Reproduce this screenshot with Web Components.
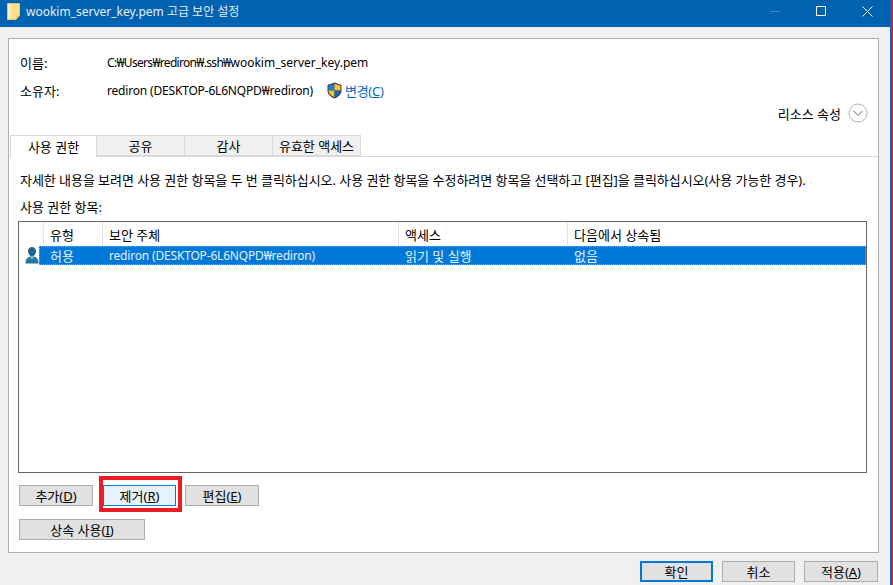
<!DOCTYPE html>
<html lang="ko">
<head>
<meta charset="utf-8">
<title>wookim_server_key.pem 고급 보안 설정</title>
<style>
  html, body { margin: 0; padding: 0; height: 100%; overflow: hidden; background: #f0f0f0; }
  body { font: 13px "Noto Sans", "Noto Sans CJK KR", sans-serif; color: #000; }
  .latin { font-size: 12px; }
  .squeeze { letter-spacing: -0.68px; }
  .tight { letter-spacing: -0.18px; }
</style>
</head>
<body>
<security-window>
  <info-row slot="info" label="이름:" style="height:28px"><span class="latin"><span class="squeeze">C:₩Users₩rediron₩.ssh₩</span>wookim_server_key.pem</span></info-row>
  <info-row slot="info" label="소유자:" style="height:28px">
    <span class="latin tight">rediron (DESKTOP-6L6NQPD₩rediron)</span>
    <change-link></change-link>
  </info-row>
  <perm-tabs slot="tabs"></perm-tabs>
  <perm-list slot="list"></perm-list>
  <div slot="actions" class="actions" style="display:flex;gap:10px;margin-bottom:13px;position:relative">
    <win-button width="74">추가(<u>D</u>)</win-button>
    <win-button width="73" hot>제거(<u>R</u>)</win-button>
    <win-button width="74" style="margin-left:-1px">편집(<u>E</u>)</win-button>
    <red-mark></red-mark>
  </div>
  <div slot="actions"><win-button width="126">상속 사용(<u>I</u>)</win-button></div>
  <win-button slot="footer" width="73" primary>확인</win-button>
  <win-button slot="footer" width="73">취소</win-button>
  <win-button slot="footer" width="74">적용(<u>A</u>)</win-button>
</security-window>

<script>
// Outer frame: title bar, white panel, footer buttons
class SecurityWindow extends HTMLElement {
  constructor() {
    super()
    this.attachShadow({ mode: 'open' })
    this.shadowRoot.innerHTML = `
      <style>
        :host { display: flex; width: 893px; height: 585px; overflow: hidden; }
        .window { width: 890px; border-right: 1px solid #0063b1; background: #f0f0f0; display: flex; flex-direction: column; }
        .edge { width: 2px; background: #ed1c24; }
        .titlebar { height: 27px; box-sizing: border-box; padding-bottom: 5px; background: #0063b1; display: flex; align-items: center; color: #fff; flex: none; }
        .titlebar svg.file { margin: 1px 6px 0 7px; flex: none; }
        .titlebar .name { flex: 1; font-size: 12px; color: #e4eefa; white-space: nowrap; }
        .controls { display: flex; align-items: center; }
        .controls span { width: 46px; height: 22px; display: flex; align-items: center; justify-content: center; }
        .panel { margin: 11px 11px 0 8px; height: 513px; border: 1px solid #b0b0b0; background: #fff; display: flex; flex-direction: column; flex: none; box-sizing: content-box; }
        .info { padding: 9px 11px 0 11px; height: 56px; flex: none; }
        .resource { height: 18px; margin: 0 10px 13px 0; display: flex; justify-content: flex-end; align-items: center; gap: 7px; flex: none; }
        .tabs { flex: none; height: 22px; }
        .body { padding: 14px 11px 0 9px; flex: 1; display: flex; flex-direction: column; min-height: 0; }
        .hint { height: 18px; line-height: 18px; white-space: nowrap; letter-spacing: -0.05px; padding-left: 2px; }
        .caption { height: 18px; line-height: 18px; margin-top: 9px; margin-bottom: 5px; padding-left: 2px; }
        .list { height: 252px; flex: none; }
        .actions { padding: 12px 0 0 1px; }
        .footer { display: flex; justify-content: flex-end; gap: 9px; margin: 8px 12px 0 0; }
      </style>
      <div class="window">
        <div class="titlebar">
          <svg class="file" width="13" height="17" viewBox="0 0 13 17">
            <path d="M0.5 0.5H12.5V12.5L9 16.5H0.5Z" fill="#fde08a" stroke="#e8c767"/>
            <path d="M9 16.5V12.5H12.5Z" fill="#f3c95c"/>
            <rect x="1" y="1" width="3" height="15" fill="#ffeeb5"/>
          </svg>
          <span class="name">wookim_server_key.pem 고급 보안 설정</span>
          <div class="controls">
            <span><svg width="10" height="10"><rect y="5" width="10" height="1" fill="#3d86cc"/></svg></span>
            <span><svg width="10" height="10"><rect x=".5" y=".5" width="9" height="9" fill="none" stroke="#fff"/></svg></span>
            <span><svg width="11" height="11"><path d="M.5 .5L10.5 10.5M10.5 .5L.5 10.5" stroke="#fff" fill="none"/></svg></span>
          </div>
        </div>
        <div class="panel">
          <div class="info"><slot name="info"></slot></div>
          <div class="resource">리소스 속성
            <svg width="20" height="20" viewBox="0 0 20 20">
              <circle cx="10" cy="10" r="9" fill="#fff" stroke="#b4b4b4"/>
              <path d="M5.5 8L10 12.5L14.5 8" fill="none" stroke="#a8a8a8" stroke-width="1.2"/>
            </svg>
          </div>
          <div class="tabs"><slot name="tabs"></slot></div>
          <div class="body">
            <div class="hint">자세한 내용을 보려면 사용 권한 항목을 두 번 클릭하십시오. 사용 권한 항목을 수정하려면 항목을 선택하고 [편집]을 클릭하십시오(사용 가능한 경우).</div>
            <div class="caption">사용 권한 항목:</div>
            <div class="list"><slot name="list"></slot></div>
            <div class="actions"><slot name="actions"></slot></div>
          </div>
        </div>
        <div class="footer"><slot name="footer"></slot></div>
      </div>
      <div class="edge"></div>
    `
  }
}

// Label + value line at the top of the panel
class InfoRow extends HTMLElement {
  constructor() {
    super()
    this.attachShadow({ mode: 'open' })
    this.shadowRoot.innerHTML = `
      <style>
        :host { display: flex; align-items: center; white-space: nowrap; }
        .label { width: 87px; flex: none; }
        .value { display: flex; align-items: center; }
      </style>
      <span class="label"></span>
      <span class="value"><slot></slot></span>
    `
    this.shadowRoot.querySelector('.label').textContent = this.getAttribute('label')
  }
}

// Shield icon and the blue link
class ChangeLink extends HTMLElement {
  constructor() {
    super()
    this.attachShadow({ mode: 'open' })
    this.shadowRoot.innerHTML = `
      <style>
        :host { display: inline-flex; align-items: center; margin-left: 14px; color: #0066cc; gap: 3px; letter-spacing: -0.3px; }
        u { text-underline-offset: 1px; }
      </style>
      <svg width="15" height="17" viewBox="0 0 15 17">
        <path d="M7.5 .5L14.5 3V8.5C14.5 12.5 11 15 7.5 16.5C4 15 .5 12.5 .5 8.5V3Z" fill="#3a3a3a"/>
        <path d="M7.5 1.7V8.5H1.5V3.7Z" fill="#1e7fd6"/>
        <path d="M7.5 1.7L13.5 3.7V8.5H7.5Z" fill="#f7c531"/>
        <path d="M1.5 8.5H7.5V15.2C4.5 14 1.7 11.8 1.5 8.5Z" fill="#f7c531"/>
        <path d="M7.5 8.5H13.5C13.3 11.8 10.5 14 7.5 15.2Z" fill="#1668b8"/>
      </svg>
      <span>변경(<u>C</u>)</span>
    `
  }
}

// Tab strip, first tab is the selected one
class PermTabs extends HTMLElement {
  constructor() {
    super()
    this.attachShadow({ mode: 'open' })
    const names = ['사용 권한', '공유', '감사', '유효한 액세스']
    this.shadowRoot.innerHTML = `
      <style>
        :host { display: flex; height: 22px; box-sizing: border-box; padding-left: 1px; position: relative; }
        :host::after { content: ""; position: absolute; left: 0; right: 0; bottom: 0; height: 1px; background: #d9d9d9; }
        .tab { width: 88px; height: 21px; box-sizing: border-box; border: 1px solid #d9d9d9; border-left: 0; background: #f0f0f0; display: flex; align-items: center; justify-content: center; white-space: nowrap; }
        .tab.first { width: 87px; border-left: 1px solid #d9d9d9; border-top: 1px solid #d9d9d9; background: #fff; height: 22px; border-bottom: 0; position: relative; z-index: 1; }
      </style>
      ${names.map((n, i) => `<div class="tab${i === 0 ? ' first' : ''}">${n}</div>`).join('')}
    `
  }
}

// Permission entries list with a header row
class PermList extends HTMLElement {
  constructor() {
    super()
    this.attachShadow({ mode: 'open' })
    this.shadowRoot.innerHTML = `
      <style>
        :host { display: block; height: 252px; box-sizing: border-box; border: 1px solid #646464; background: #fff; }
        .row { display: grid; grid-template-columns: 25px 59px 296px 169px 1fr; white-space: nowrap; }
        .head { height: 24px; align-items: stretch; }
        .head div { display: flex; align-items: center; padding-left: 6px; border-right: 1px solid #e5e5e5; }
        .head div:first-child { padding: 0; }
        .head div:last-child { border-right: 0; }
        .item { height: 19px; }
        .icon { display: flex; align-items: center; justify-content: center; }
        .sel { grid-column: 2 / 6; display: grid; grid-template-columns: 64px 296px 169px 1fr; margin-left: -5px; background: #0078d7; color: #e6f1fb; box-sizing: border-box; outline: 1px dotted #f08a24; outline-offset: -1px; align-items: center; }
        .sel > span { padding-left: 6px; }
        .sel > span:first-child { padding-left: 11px; }
        .latin { font-size: 12px; letter-spacing: -0.18px; }
      </style>
      <div class="row head">
        <div></div><div>유형</div><div>보안 주체</div><div>액세스</div><div>다음에서 상속됨</div>
      </div>
      <div class="row item">
        <div class="icon">
          <svg width="14" height="19" viewBox="0 0 14 19">
            <defs>
              <linearGradient id="body" x1="0" y1="0" x2="0" y2="1">
                <stop offset="0" stop-color="#2f86a8"/>
                <stop offset="1" stop-color="#1f6f92"/>
              </linearGradient>
            </defs>
            <path d="M.5 17.5C.3 13 2.5 11 5 10.5H9C11.5 11 13.7 13 13.5 17.5Z" fill="url(#body)"/>
            <path d="M3 5C3 2.5 5 1 7 1S11 2.5 11 5C11 8 9 10.5 7 10.5S3 8 3 5Z" fill="#23648e"/>
            <path d="M5 10.5H9L7 13.5Z" fill="#7cc0d4"/>
          </svg>
        </div>
        <div class="sel">
          <span>허용</span><span class="latin">rediron (DESKTOP-6L6NQPD₩rediron)</span><span>읽기 및 실행</span><span>없음</span>
        </div>
      </div>
    `
  }
}

// Classic gray dialog button
class WinButton extends HTMLElement {
  constructor() {
    super()
    this.attachShadow({ mode: 'open' })
    this.shadowRoot.innerHTML = `
      <style>
        :host { display: inline-flex; height: 21px; box-sizing: border-box; border: 1px solid #adadad; background: #e1e1e1; align-items: center; justify-content: center; white-space: nowrap; }
        :host([hot]) { border-color: #0078d7; background: #e5f1fb; }
        :host([primary]) { border: 2px solid #0078d7; }
      </style>
      <slot></slot>
    `
    this.style.width = this.getAttribute('width') + 'px'
  }
}

// Red annotation box drawn over the second button
class RedMark extends HTMLElement {
  constructor() {
    super()
    this.attachShadow({ mode: 'open' })
    this.shadowRoot.innerHTML = `
      <style>
        :host { display: block; position: absolute; left: 80px; top: -9px; width: 83px; height: 36px; box-sizing: border-box; border: 4px solid #ed1c24; pointer-events: none; }
      </style>
    `
  }
}

customElements.define('security-window', SecurityWindow)
customElements.define('info-row', InfoRow)
customElements.define('change-link', ChangeLink)
customElements.define('perm-tabs', PermTabs)
customElements.define('perm-list', PermList)
customElements.define('win-button', WinButton)
customElements.define('red-mark', RedMark)
</script>
</body>
</html>
